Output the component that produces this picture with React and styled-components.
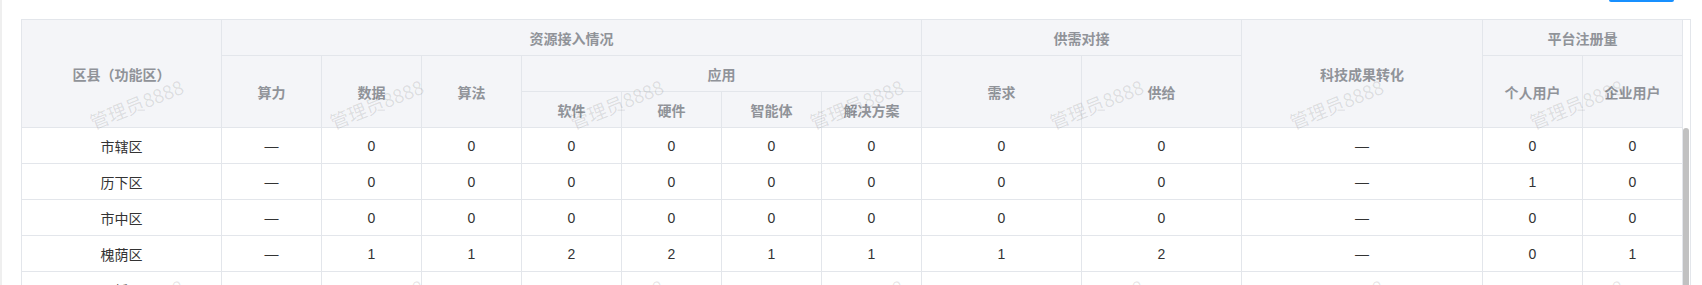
import React from 'react';
import styled, { createGlobalStyle } from 'styled-components';

const GlobalStyle = createGlobalStyle`
  html, body {
    margin: 0;
    padding: 0;
    overflow: hidden;
    background: #fff;
  }
  body {
    font-family: "Liberation Sans", "Noto Sans CJK SC", sans-serif;
  }
`;

const COLS = '200px repeat(7, 100px) 160px 160px 241px 100px 100px';
const LINE = '#e3e6eb';

const Page = styled.div`
  position: relative;
  height: 285px;
  overflow: hidden;
  border-left: 2px solid #efefef;
  padding: 0 11px 0 19px;
`;

const Toolbar = styled.div`
  display: flex;
  justify-content: flex-end;
  padding-right: 17px;
  margin-bottom: 17px;
`;

const ButtonEdge = styled.div`
  width: 65px;
  height: 2px;
  background: #1890ff;
  border-radius: 0 0 3px 3px;
`;

const TableBox = styled.div`
  width: fit-content;
  border: 1px solid ${LINE};
  border-bottom: none;
`;

const Section = styled.div`
  display: flex;
`;

const HeadGrid = styled.div`
  display: grid;
  grid-template-columns: ${COLS};
  grid-template-rows: repeat(3, 36px);
  background: #f4f5f8;
`;

const BodyGrid = styled.div`
  display: grid;
  grid-template-columns: ${COLS};
  grid-auto-rows: 36px;
`;

const Gutter = styled.div`
  width: 7px;
  background: #fff;
`;

const Thumb = styled.div`
  width: 6px;
  height: 220px;
  background: #c1c1c1;
  border-radius: 3px;
`;

const HeadCell = styled.div`
  grid-column: ${p => p.$col};
  grid-row: ${p => p.$row};
  display: flex;
  align-items: center;
  justify-content: center;
  border-right: 1px solid ${LINE};
  border-bottom: 1px solid ${LINE};
  color: #909399;
  font-size: 14px;
  font-weight: 700;
  white-space: nowrap;
`;

const Cell = styled.div`
  display: flex;
  align-items: center;
  justify-content: center;
  border-right: 1px solid ${LINE};
  border-bottom: 1px solid ${LINE};
  color: #333;
  font-size: 14px;
  white-space: nowrap;
`;

// 水印层，盖在表格上方
const MarkLayer = styled.div`
  position: absolute;
  left: 14px;
  top: 3px;
  display: grid;
  grid-template-columns: repeat(7, 240px);
  grid-auto-rows: 200px;
  pointer-events: none;
`;

const Mark = styled.div`
  display: flex;
  align-items: center;
  justify-content: center;
  transform: rotate(-22deg);
  color: rgba(0, 0, 0, 0.1);
  font-family: "Noto Sans CJK SC", sans-serif;
  font-size: 19px;
  white-space: nowrap;
`;

const headers = [
  { text: '区县（功能区）', col: '1', row: '1 / 4' },
  { text: '资源接入情况', col: '2 / 9', row: '1' },
  { text: '供需对接', col: '9 / 11', row: '1' },
  { text: '科技成果转化', col: '11', row: '1 / 4' },
  { text: '平台注册量', col: '12 / 14', row: '1' },
  { text: '算力', col: '2', row: '2 / 4' },
  { text: '数据', col: '3', row: '2 / 4' },
  { text: '算法', col: '4', row: '2 / 4' },
  { text: '应用', col: '5 / 9', row: '2' },
  { text: '需求', col: '9', row: '2 / 4' },
  { text: '供给', col: '10', row: '2 / 4' },
  { text: '个人用户', col: '12', row: '2 / 4' },
  { text: '企业用户', col: '13', row: '2 / 4' },
  { text: '软件', col: '5', row: '3' },
  { text: '硬件', col: '6', row: '3' },
  { text: '智能体', col: '7', row: '3' },
  { text: '解决方案', col: '8', row: '3' },
];

const rows = [
  ['市辖区', '—', 0, 0, 0, 0, 0, 0, 0, 0, '—', 0, 0],
  ['历下区', '—', 0, 0, 0, 0, 0, 0, 0, 0, '—', 1, 0],
  ['市中区', '—', 0, 0, 0, 0, 0, 0, 0, 0, '—', 0, 0],
  ['槐荫区', '—', 1, 1, 2, 2, 1, 1, 1, 2, '—', 0, 1],
  ['天桥区', '—', 1, 1, 1, 1, 1, 1, 1, 1, '—', 1, 1],
];

const App = () => {
  return (
    <Page>
      <GlobalStyle />
      <Toolbar>
        <ButtonEdge />
      </Toolbar>
      <TableBox>
        <Section>
          <HeadGrid>
            {headers.map(h => (
              <HeadCell key={h.text} $col={h.col} $row={h.row}>{h.text}</HeadCell>
            ))}
          </HeadGrid>
          <Gutter />
        </Section>
        <Section>
          <BodyGrid>
            {rows.map(r => r.map((v, i) => (
              <Cell key={r[0] + i}>{v}</Cell>
            )))}
          </BodyGrid>
          <Gutter>
            <Thumb />
          </Gutter>
        </Section>
      </TableBox>
      <MarkLayer>
        {Array.from({ length: 14 }).map((_, i) => (
          <Mark key={i}>管理员8888</Mark>
        ))}
      </MarkLayer>
    </Page>
  );
};

export default App;
